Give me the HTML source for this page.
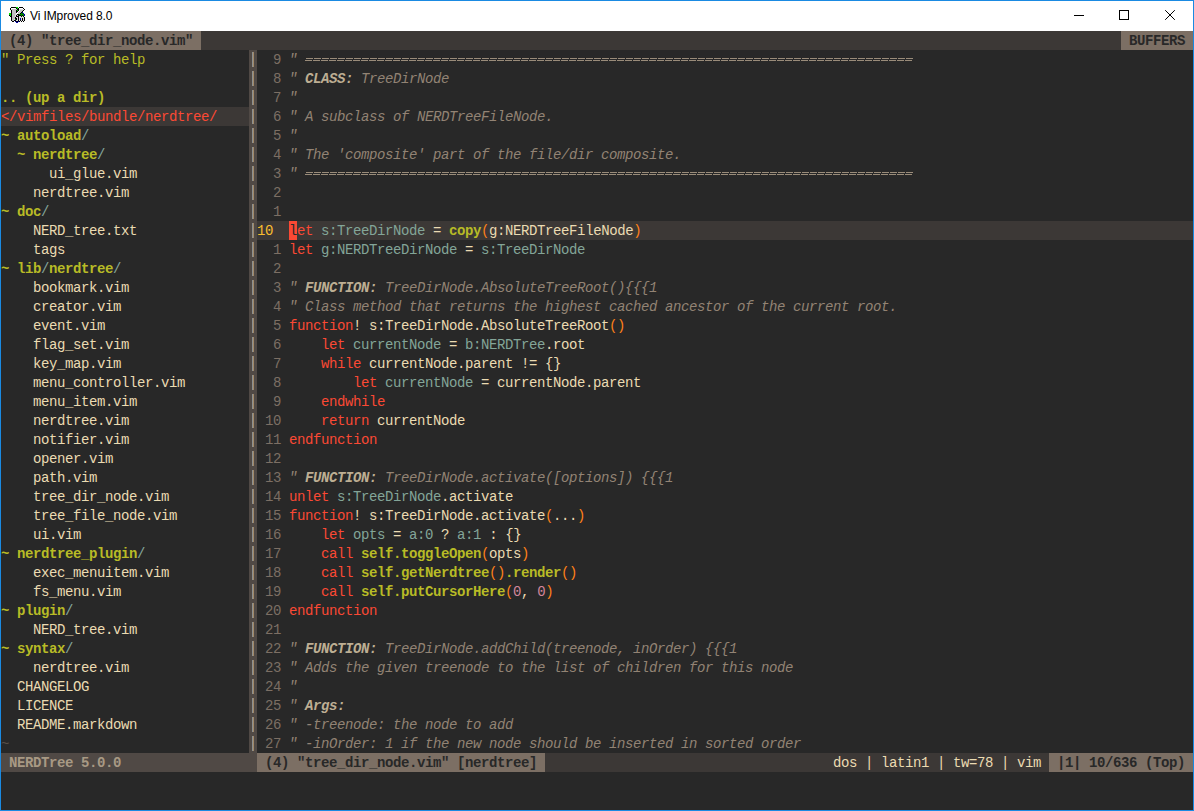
<!DOCTYPE html>
<html><head><meta charset="utf-8"><style>
html,body{margin:0;padding:0}
body{width:1194px;height:811px;position:relative;overflow:hidden;background:#282828}
.r{position:absolute;height:19px;line-height:19px;white-space:pre;font-family:"Liberation Mono",monospace;font-size:14.0px;letter-spacing:-0.4px}
#frame{position:absolute;left:0;top:0;width:1192px;height:809px;border:1px solid #1a8ae2;pointer-events:none}
#title{position:absolute;left:1px;top:1px;width:1192px;height:30px;background:#fff}
#tt{position:absolute;left:30px;top:8px;font-family:"Liberation Sans",sans-serif;font-size:12px;letter-spacing:-0.1px;color:#000;line-height:16px;white-space:pre}
</style></head><body>
<div id="title"></div>
<svg style="position:absolute;left:8px;top:6px" width="18" height="17" viewBox="0 0 18 17" shape-rendering="crispEdges"><rect x="3" y="1" width="5" height="1" fill="#000"/><rect x="8" y="1" width="2" height="1" fill="#00e000"/><rect x="10" y="1" width="1" height="1" fill="#fff"/><rect x="11" y="1" width="4" height="1" fill="#000"/><rect x="2" y="2" width="1" height="1" fill="#000"/><rect x="3" y="2" width="5" height="1" fill="#fff"/><rect x="8" y="2" width="1" height="1" fill="#000"/><rect x="9" y="2" width="1" height="1" fill="#00e000"/><rect x="10" y="2" width="1" height="1" fill="#000"/><rect x="11" y="2" width="4" height="1" fill="#fff"/><rect x="15" y="2" width="1" height="1" fill="#000"/><rect x="2" y="3" width="1" height="1" fill="#000"/><rect x="3" y="3" width="1" height="1" fill="#dcdcdc"/><rect x="4" y="3" width="5" height="1" fill="#c0c0c0"/><rect x="9" y="3" width="2" height="1" fill="#000"/><rect x="11" y="3" width="4" height="1" fill="#dcdcdc"/><rect x="16" y="3" width="1" height="1" fill="#000"/><rect x="3" y="4" width="1" height="1" fill="#000"/><rect x="4" y="4" width="4" height="1" fill="#c0c0c0"/><rect x="8" y="4" width="1" height="1" fill="#000"/><rect x="9" y="4" width="1" height="1" fill="#00e000"/><rect x="10" y="4" width="1" height="1" fill="#000"/><rect x="11" y="4" width="1" height="1" fill="#fff"/><rect x="12" y="4" width="3" height="1" fill="#c0c0c0"/><rect x="15" y="4" width="1" height="1" fill="#000"/><rect x="3" y="5" width="1" height="1" fill="#000"/><rect x="4" y="5" width="4" height="1" fill="#c0c0c0"/><rect x="8" y="5" width="2" height="1" fill="#000"/><rect x="10" y="5" width="1" height="1" fill="#fff"/><rect x="11" y="5" width="3" height="1" fill="#c0c0c0"/><rect x="14" y="5" width="1" height="1" fill="#000"/><rect x="3" y="6" width="1" height="1" fill="#000"/><rect x="4" y="6" width="4" height="1" fill="#c0c0c0"/><rect x="8" y="6" width="1" height="1" fill="#000"/><rect x="9" y="6" width="1" height="1" fill="#fff"/><rect x="10" y="6" width="3" height="1" fill="#c0c0c0"/><rect x="13" y="6" width="1" height="1" fill="#000"/><rect x="14" y="6" width="1" height="1" fill="#0000a8"/><rect x="1" y="7" width="2" height="1" fill="#00e000"/><rect x="3" y="7" width="1" height="1" fill="#000"/><rect x="4" y="7" width="4" height="1" fill="#c0c0c0"/><rect x="8" y="7" width="2" height="1" fill="#fff"/><rect x="10" y="7" width="2" height="1" fill="#c0c0c0"/><rect x="12" y="7" width="1" height="1" fill="#000"/><rect x="13" y="7" width="2" height="1" fill="#008800"/><rect x="15" y="7" width="1" height="1" fill="#0000a8"/><rect x="1" y="8" width="2" height="1" fill="#00e000"/><rect x="3" y="8" width="1" height="1" fill="#000"/><rect x="4" y="8" width="3" height="1" fill="#c0c0c0"/><rect x="7" y="8" width="2" height="1" fill="#dcdcdc"/><rect x="9" y="8" width="2" height="1" fill="#000"/><rect x="11" y="8" width="5" height="1" fill="#008800"/><rect x="16" y="8" width="1" height="1" fill="#0000a8"/><rect x="1" y="9" width="1" height="1" fill="#000"/><rect x="2" y="9" width="1" height="1" fill="#00e000"/><rect x="3" y="9" width="1" height="1" fill="#000"/><rect x="4" y="9" width="3" height="1" fill="#c0c0c0"/><rect x="7" y="9" width="1" height="1" fill="#dcdcdc"/><rect x="8" y="9" width="1" height="1" fill="#000"/><rect x="9" y="9" width="1" height="1" fill="#dcdcdc"/><rect x="10" y="9" width="3" height="1" fill="#000"/><rect x="13" y="9" width="1" height="1" fill="#008800"/><rect x="14" y="9" width="1" height="1" fill="#000"/><rect x="15" y="9" width="1" height="1" fill="#008800"/><rect x="16" y="9" width="1" height="1" fill="#0000a8"/><rect x="2" y="10" width="2" height="1" fill="#000"/><rect x="4" y="10" width="3" height="1" fill="#c0c0c0"/><rect x="7" y="10" width="1" height="1" fill="#dcdcdc"/><rect x="8" y="10" width="3" height="1" fill="#000"/><rect x="11" y="10" width="2" height="1" fill="#dcdcdc"/><rect x="13" y="10" width="1" height="1" fill="#000"/><rect x="14" y="10" width="1" height="1" fill="#dcdcdc"/><rect x="15" y="10" width="1" height="1" fill="#000"/><rect x="3" y="11" width="1" height="1" fill="#000"/><rect x="4" y="11" width="3" height="1" fill="#c0c0c0"/><rect x="7" y="11" width="1" height="1" fill="#000"/><rect x="8" y="11" width="2" height="1" fill="#dcdcdc"/><rect x="10" y="11" width="1" height="1" fill="#000"/><rect x="11" y="11" width="5" height="1" fill="#dcdcdc"/><rect x="16" y="11" width="1" height="1" fill="#000"/><rect x="3" y="12" width="1" height="1" fill="#000"/><rect x="4" y="12" width="3" height="1" fill="#c0c0c0"/><rect x="7" y="12" width="2" height="1" fill="#000"/><rect x="9" y="12" width="1" height="1" fill="#dcdcdc"/><rect x="10" y="12" width="1" height="1" fill="#000"/><rect x="11" y="12" width="1" height="1" fill="#dcdcdc"/><rect x="12" y="12" width="1" height="1" fill="#0000a8"/><rect x="13" y="12" width="1" height="1" fill="#dcdcdc"/><rect x="14" y="12" width="1" height="1" fill="#000"/><rect x="15" y="12" width="1" height="1" fill="#dcdcdc"/><rect x="16" y="12" width="1" height="1" fill="#000"/><rect x="3" y="13" width="1" height="1" fill="#000"/><rect x="4" y="13" width="2" height="1" fill="#c0c0c0"/><rect x="6" y="13" width="1" height="1" fill="#dcdcdc"/><rect x="7" y="13" width="1" height="1" fill="#008800"/><rect x="8" y="13" width="1" height="1" fill="#000"/><rect x="9" y="13" width="1" height="1" fill="#dcdcdc"/><rect x="10" y="13" width="1" height="1" fill="#000"/><rect x="11" y="13" width="1" height="1" fill="#dcdcdc"/><rect x="12" y="13" width="1" height="1" fill="#0000a8"/><rect x="13" y="13" width="1" height="1" fill="#dcdcdc"/><rect x="14" y="13" width="1" height="1" fill="#000"/><rect x="15" y="13" width="1" height="1" fill="#dcdcdc"/><rect x="16" y="13" width="1" height="1" fill="#000"/><rect x="3" y="14" width="1" height="1" fill="#000"/><rect x="4" y="14" width="2" height="1" fill="#c0c0c0"/><rect x="6" y="14" width="2" height="1" fill="#000"/><rect x="8" y="14" width="2" height="1" fill="#dcdcdc"/><rect x="10" y="14" width="1" height="1" fill="#000"/><rect x="11" y="14" width="1" height="1" fill="#dcdcdc"/><rect x="12" y="14" width="1" height="1" fill="#000"/><rect x="13" y="14" width="1" height="1" fill="#dcdcdc"/><rect x="14" y="14" width="1" height="1" fill="#000"/><rect x="15" y="14" width="1" height="1" fill="#dcdcdc"/><rect x="16" y="14" width="1" height="1" fill="#000"/><rect x="4" y="15" width="2" height="1" fill="#000"/><rect x="7" y="15" width="1" height="1" fill="#0000a8"/><rect x="8" y="15" width="2" height="1" fill="#000"/><rect x="10" y="15" width="1" height="1" fill="#0000a8"/><rect x="11" y="15" width="1" height="1" fill="#000"/><rect x="13" y="15" width="1" height="1" fill="#000"/><rect x="15" y="15" width="1" height="1" fill="#000"/><rect x="8" y="16" width="2" height="1" fill="#0000a8"/></svg>
<div id="tt">Vi IMproved 8.0</div>
<svg style="position:absolute;left:1064px;top:0" width="130" height="31" viewBox="0 0 130 31">
<rect x="10" y="15" width="10" height="1" fill="#000"/>
<rect x="55.5" y="10.5" width="9" height="9" fill="none" stroke="#000" stroke-width="1"/>
<path d="M101.2 10.2 L110.8 19.8 M110.8 10.2 L101.2 19.8" stroke="#000" stroke-width="1" fill="none"/>
</svg>
<div style="position:absolute;left:1px;top:31px;width:1192px;height:19px;background:#3c3836"></div>
<div style="position:absolute;left:1px;top:31px;width:200px;height:19px;background:#7c6f64"></div>
<div class="r" style="left:1px;top:32px"><span style="color:#282828;font-weight:bold"> (4) &quot;tree_dir_node.vim&quot; </span></div>
<div style="position:absolute;left:1121px;top:31px;width:72px;height:19px;background:#7c6f64"></div>
<div class="r" style="left:1121px;top:32px"><span style="color:#282828;font-weight:bold"> BUFFERS </span></div>
<div style="position:absolute;left:1px;top:107px;width:248px;height:19px;background:#3c3836"></div>
<div class="r" style="left:1px;top:51px"><span style="color:#b8bb26">&quot; Press ? for help</span></div>
<div class="r" style="left:1px;top:89px"><span style="color:#b8bb26;font-weight:bold">.. (up a dir)</span></div>
<div class="r" style="left:1px;top:108px"><span style="color:#fb4934">&lt;/vimfiles/bundle/nerdtree/</span></div>
<div class="r" style="left:1px;top:127px"><span style="color:#b8bb26;font-weight:bold">~ autoload</span><span style="color:#83a598">/</span></div>
<div class="r" style="left:1px;top:146px"><span style="color:#ebdbb2">  </span><span style="color:#b8bb26;font-weight:bold">~ nerdtree</span><span style="color:#83a598">/</span></div>
<div class="r" style="left:1px;top:165px"><span style="color:#ebdbb2">      ui_glue.vim</span></div>
<div class="r" style="left:1px;top:184px"><span style="color:#ebdbb2">    nerdtree.vim</span></div>
<div class="r" style="left:1px;top:203px"><span style="color:#b8bb26;font-weight:bold">~ doc</span><span style="color:#83a598">/</span></div>
<div class="r" style="left:1px;top:222px"><span style="color:#ebdbb2">    NERD_tree.txt</span></div>
<div class="r" style="left:1px;top:241px"><span style="color:#ebdbb2">    tags</span></div>
<div class="r" style="left:1px;top:260px"><span style="color:#b8bb26;font-weight:bold">~ lib</span><span style="color:#83a598">/</span><span style="color:#b8bb26;font-weight:bold">nerdtree</span><span style="color:#83a598">/</span></div>
<div class="r" style="left:1px;top:279px"><span style="color:#ebdbb2">    bookmark.vim</span></div>
<div class="r" style="left:1px;top:298px"><span style="color:#ebdbb2">    creator.vim</span></div>
<div class="r" style="left:1px;top:317px"><span style="color:#ebdbb2">    event.vim</span></div>
<div class="r" style="left:1px;top:336px"><span style="color:#ebdbb2">    flag_set.vim</span></div>
<div class="r" style="left:1px;top:355px"><span style="color:#ebdbb2">    key_map.vim</span></div>
<div class="r" style="left:1px;top:374px"><span style="color:#ebdbb2">    menu_controller.vim</span></div>
<div class="r" style="left:1px;top:393px"><span style="color:#ebdbb2">    menu_item.vim</span></div>
<div class="r" style="left:1px;top:412px"><span style="color:#ebdbb2">    nerdtree.vim</span></div>
<div class="r" style="left:1px;top:431px"><span style="color:#ebdbb2">    notifier.vim</span></div>
<div class="r" style="left:1px;top:450px"><span style="color:#ebdbb2">    opener.vim</span></div>
<div class="r" style="left:1px;top:469px"><span style="color:#ebdbb2">    path.vim</span></div>
<div class="r" style="left:1px;top:488px"><span style="color:#ebdbb2">    tree_dir_node.vim</span></div>
<div class="r" style="left:1px;top:507px"><span style="color:#ebdbb2">    tree_file_node.vim</span></div>
<div class="r" style="left:1px;top:526px"><span style="color:#ebdbb2">    ui.vim</span></div>
<div class="r" style="left:1px;top:545px"><span style="color:#b8bb26;font-weight:bold">~ nerdtree_plugin</span><span style="color:#83a598">/</span></div>
<div class="r" style="left:1px;top:564px"><span style="color:#ebdbb2">    exec_menuitem.vim</span></div>
<div class="r" style="left:1px;top:583px"><span style="color:#ebdbb2">    fs_menu.vim</span></div>
<div class="r" style="left:1px;top:602px"><span style="color:#b8bb26;font-weight:bold">~ plugin</span><span style="color:#83a598">/</span></div>
<div class="r" style="left:1px;top:621px"><span style="color:#ebdbb2">    NERD_tree.vim</span></div>
<div class="r" style="left:1px;top:640px"><span style="color:#b8bb26;font-weight:bold">~ syntax</span><span style="color:#83a598">/</span></div>
<div class="r" style="left:1px;top:659px"><span style="color:#ebdbb2">    nerdtree.vim</span></div>
<div class="r" style="left:1px;top:678px"><span style="color:#ebdbb2">  CHANGELOG</span></div>
<div class="r" style="left:1px;top:697px"><span style="color:#ebdbb2">  LICENCE</span></div>
<div class="r" style="left:1px;top:716px"><span style="color:#ebdbb2">  README.markdown</span></div>
<div class="r" style="left:1px;top:735px"><span style="color:#5a5049">~</span></div>
<div style="position:absolute;left:249px;top:50px;width:8px;height:19px;background:#504945"></div>
<div style="position:absolute;left:252px;top:52px;width:1px;height:15px;background:#8c9090"></div>
<div style="position:absolute;left:253px;top:52px;width:1px;height:15px;background:#a08868"></div>
<div style="position:absolute;left:249px;top:69px;width:8px;height:19px;background:#504945"></div>
<div style="position:absolute;left:252px;top:71px;width:1px;height:15px;background:#8c9090"></div>
<div style="position:absolute;left:253px;top:71px;width:1px;height:15px;background:#a08868"></div>
<div style="position:absolute;left:249px;top:88px;width:8px;height:19px;background:#504945"></div>
<div style="position:absolute;left:252px;top:90px;width:1px;height:15px;background:#8c9090"></div>
<div style="position:absolute;left:253px;top:90px;width:1px;height:15px;background:#a08868"></div>
<div style="position:absolute;left:249px;top:107px;width:8px;height:19px;background:#504945"></div>
<div style="position:absolute;left:252px;top:109px;width:1px;height:15px;background:#8c9090"></div>
<div style="position:absolute;left:253px;top:109px;width:1px;height:15px;background:#a08868"></div>
<div style="position:absolute;left:249px;top:126px;width:8px;height:19px;background:#504945"></div>
<div style="position:absolute;left:252px;top:128px;width:1px;height:15px;background:#8c9090"></div>
<div style="position:absolute;left:253px;top:128px;width:1px;height:15px;background:#a08868"></div>
<div style="position:absolute;left:249px;top:145px;width:8px;height:19px;background:#504945"></div>
<div style="position:absolute;left:252px;top:147px;width:1px;height:15px;background:#8c9090"></div>
<div style="position:absolute;left:253px;top:147px;width:1px;height:15px;background:#a08868"></div>
<div style="position:absolute;left:249px;top:164px;width:8px;height:19px;background:#504945"></div>
<div style="position:absolute;left:252px;top:166px;width:1px;height:15px;background:#8c9090"></div>
<div style="position:absolute;left:253px;top:166px;width:1px;height:15px;background:#a08868"></div>
<div style="position:absolute;left:249px;top:183px;width:8px;height:19px;background:#504945"></div>
<div style="position:absolute;left:252px;top:185px;width:1px;height:15px;background:#8c9090"></div>
<div style="position:absolute;left:253px;top:185px;width:1px;height:15px;background:#a08868"></div>
<div style="position:absolute;left:249px;top:202px;width:8px;height:19px;background:#504945"></div>
<div style="position:absolute;left:252px;top:204px;width:1px;height:15px;background:#8c9090"></div>
<div style="position:absolute;left:253px;top:204px;width:1px;height:15px;background:#a08868"></div>
<div style="position:absolute;left:249px;top:221px;width:8px;height:19px;background:#504945"></div>
<div style="position:absolute;left:252px;top:223px;width:1px;height:15px;background:#8c9090"></div>
<div style="position:absolute;left:253px;top:223px;width:1px;height:15px;background:#a08868"></div>
<div style="position:absolute;left:249px;top:240px;width:8px;height:19px;background:#504945"></div>
<div style="position:absolute;left:252px;top:242px;width:1px;height:15px;background:#8c9090"></div>
<div style="position:absolute;left:253px;top:242px;width:1px;height:15px;background:#a08868"></div>
<div style="position:absolute;left:249px;top:259px;width:8px;height:19px;background:#504945"></div>
<div style="position:absolute;left:252px;top:261px;width:1px;height:15px;background:#8c9090"></div>
<div style="position:absolute;left:253px;top:261px;width:1px;height:15px;background:#a08868"></div>
<div style="position:absolute;left:249px;top:278px;width:8px;height:19px;background:#504945"></div>
<div style="position:absolute;left:252px;top:280px;width:1px;height:15px;background:#8c9090"></div>
<div style="position:absolute;left:253px;top:280px;width:1px;height:15px;background:#a08868"></div>
<div style="position:absolute;left:249px;top:297px;width:8px;height:19px;background:#504945"></div>
<div style="position:absolute;left:252px;top:299px;width:1px;height:15px;background:#8c9090"></div>
<div style="position:absolute;left:253px;top:299px;width:1px;height:15px;background:#a08868"></div>
<div style="position:absolute;left:249px;top:316px;width:8px;height:19px;background:#504945"></div>
<div style="position:absolute;left:252px;top:318px;width:1px;height:15px;background:#8c9090"></div>
<div style="position:absolute;left:253px;top:318px;width:1px;height:15px;background:#a08868"></div>
<div style="position:absolute;left:249px;top:335px;width:8px;height:19px;background:#504945"></div>
<div style="position:absolute;left:252px;top:337px;width:1px;height:15px;background:#8c9090"></div>
<div style="position:absolute;left:253px;top:337px;width:1px;height:15px;background:#a08868"></div>
<div style="position:absolute;left:249px;top:354px;width:8px;height:19px;background:#504945"></div>
<div style="position:absolute;left:252px;top:356px;width:1px;height:15px;background:#8c9090"></div>
<div style="position:absolute;left:253px;top:356px;width:1px;height:15px;background:#a08868"></div>
<div style="position:absolute;left:249px;top:373px;width:8px;height:19px;background:#504945"></div>
<div style="position:absolute;left:252px;top:375px;width:1px;height:15px;background:#8c9090"></div>
<div style="position:absolute;left:253px;top:375px;width:1px;height:15px;background:#a08868"></div>
<div style="position:absolute;left:249px;top:392px;width:8px;height:19px;background:#504945"></div>
<div style="position:absolute;left:252px;top:394px;width:1px;height:15px;background:#8c9090"></div>
<div style="position:absolute;left:253px;top:394px;width:1px;height:15px;background:#a08868"></div>
<div style="position:absolute;left:249px;top:411px;width:8px;height:19px;background:#504945"></div>
<div style="position:absolute;left:252px;top:413px;width:1px;height:15px;background:#8c9090"></div>
<div style="position:absolute;left:253px;top:413px;width:1px;height:15px;background:#a08868"></div>
<div style="position:absolute;left:249px;top:430px;width:8px;height:19px;background:#504945"></div>
<div style="position:absolute;left:252px;top:432px;width:1px;height:15px;background:#8c9090"></div>
<div style="position:absolute;left:253px;top:432px;width:1px;height:15px;background:#a08868"></div>
<div style="position:absolute;left:249px;top:449px;width:8px;height:19px;background:#504945"></div>
<div style="position:absolute;left:252px;top:451px;width:1px;height:15px;background:#8c9090"></div>
<div style="position:absolute;left:253px;top:451px;width:1px;height:15px;background:#a08868"></div>
<div style="position:absolute;left:249px;top:468px;width:8px;height:19px;background:#504945"></div>
<div style="position:absolute;left:252px;top:470px;width:1px;height:15px;background:#8c9090"></div>
<div style="position:absolute;left:253px;top:470px;width:1px;height:15px;background:#a08868"></div>
<div style="position:absolute;left:249px;top:487px;width:8px;height:19px;background:#504945"></div>
<div style="position:absolute;left:252px;top:489px;width:1px;height:15px;background:#8c9090"></div>
<div style="position:absolute;left:253px;top:489px;width:1px;height:15px;background:#a08868"></div>
<div style="position:absolute;left:249px;top:506px;width:8px;height:19px;background:#504945"></div>
<div style="position:absolute;left:252px;top:508px;width:1px;height:15px;background:#8c9090"></div>
<div style="position:absolute;left:253px;top:508px;width:1px;height:15px;background:#a08868"></div>
<div style="position:absolute;left:249px;top:525px;width:8px;height:19px;background:#504945"></div>
<div style="position:absolute;left:252px;top:527px;width:1px;height:15px;background:#8c9090"></div>
<div style="position:absolute;left:253px;top:527px;width:1px;height:15px;background:#a08868"></div>
<div style="position:absolute;left:249px;top:544px;width:8px;height:19px;background:#504945"></div>
<div style="position:absolute;left:252px;top:546px;width:1px;height:15px;background:#8c9090"></div>
<div style="position:absolute;left:253px;top:546px;width:1px;height:15px;background:#a08868"></div>
<div style="position:absolute;left:249px;top:563px;width:8px;height:19px;background:#504945"></div>
<div style="position:absolute;left:252px;top:565px;width:1px;height:15px;background:#8c9090"></div>
<div style="position:absolute;left:253px;top:565px;width:1px;height:15px;background:#a08868"></div>
<div style="position:absolute;left:249px;top:582px;width:8px;height:19px;background:#504945"></div>
<div style="position:absolute;left:252px;top:584px;width:1px;height:15px;background:#8c9090"></div>
<div style="position:absolute;left:253px;top:584px;width:1px;height:15px;background:#a08868"></div>
<div style="position:absolute;left:249px;top:601px;width:8px;height:19px;background:#504945"></div>
<div style="position:absolute;left:252px;top:603px;width:1px;height:15px;background:#8c9090"></div>
<div style="position:absolute;left:253px;top:603px;width:1px;height:15px;background:#a08868"></div>
<div style="position:absolute;left:249px;top:620px;width:8px;height:19px;background:#504945"></div>
<div style="position:absolute;left:252px;top:622px;width:1px;height:15px;background:#8c9090"></div>
<div style="position:absolute;left:253px;top:622px;width:1px;height:15px;background:#a08868"></div>
<div style="position:absolute;left:249px;top:639px;width:8px;height:19px;background:#504945"></div>
<div style="position:absolute;left:252px;top:641px;width:1px;height:15px;background:#8c9090"></div>
<div style="position:absolute;left:253px;top:641px;width:1px;height:15px;background:#a08868"></div>
<div style="position:absolute;left:249px;top:658px;width:8px;height:19px;background:#504945"></div>
<div style="position:absolute;left:252px;top:660px;width:1px;height:15px;background:#8c9090"></div>
<div style="position:absolute;left:253px;top:660px;width:1px;height:15px;background:#a08868"></div>
<div style="position:absolute;left:249px;top:677px;width:8px;height:19px;background:#504945"></div>
<div style="position:absolute;left:252px;top:679px;width:1px;height:15px;background:#8c9090"></div>
<div style="position:absolute;left:253px;top:679px;width:1px;height:15px;background:#a08868"></div>
<div style="position:absolute;left:249px;top:696px;width:8px;height:19px;background:#504945"></div>
<div style="position:absolute;left:252px;top:698px;width:1px;height:15px;background:#8c9090"></div>
<div style="position:absolute;left:253px;top:698px;width:1px;height:15px;background:#a08868"></div>
<div style="position:absolute;left:249px;top:715px;width:8px;height:19px;background:#504945"></div>
<div style="position:absolute;left:252px;top:717px;width:1px;height:15px;background:#8c9090"></div>
<div style="position:absolute;left:253px;top:717px;width:1px;height:15px;background:#a08868"></div>
<div style="position:absolute;left:249px;top:734px;width:8px;height:19px;background:#504945"></div>
<div style="position:absolute;left:252px;top:736px;width:1px;height:15px;background:#8c9090"></div>
<div style="position:absolute;left:253px;top:736px;width:1px;height:15px;background:#a08868"></div>
<div style="position:absolute;left:257px;top:221px;width:936px;height:19px;background:#3c3836"></div>
<div class="r" style="left:257px;top:51px"><span style="color:#7c6f64">  9</span></div>
<div class="r" style="left:289px;top:51px"><span style="color:#928374;font-style:italic">&quot;</span></div>
<div class="r" style="left:257px;top:70px"><span style="color:#7c6f64">  8</span></div>
<div class="r" style="left:289px;top:70px"><span style="color:#928374;font-style:italic">&quot; </span><span style="color:#bdae93;font-weight:bold;font-style:italic">CLASS:</span><span style="color:#928374;font-style:italic"> TreeDirNode</span></div>
<div class="r" style="left:257px;top:89px"><span style="color:#7c6f64">  7</span></div>
<div class="r" style="left:289px;top:89px"><span style="color:#928374;font-style:italic">&quot;</span></div>
<div class="r" style="left:257px;top:108px"><span style="color:#7c6f64">  6</span></div>
<div class="r" style="left:289px;top:108px"><span style="color:#928374;font-style:italic">&quot; A subclass of NERDTreeFileNode.</span></div>
<div class="r" style="left:257px;top:127px"><span style="color:#7c6f64">  5</span></div>
<div class="r" style="left:289px;top:127px"><span style="color:#928374;font-style:italic">&quot;</span></div>
<div class="r" style="left:257px;top:146px"><span style="color:#7c6f64">  4</span></div>
<div class="r" style="left:289px;top:146px"><span style="color:#928374;font-style:italic">&quot; The &#x27;composite&#x27; part of the file/dir composite.</span></div>
<div class="r" style="left:257px;top:165px"><span style="color:#7c6f64">  3</span></div>
<div class="r" style="left:289px;top:165px"><span style="color:#928374;font-style:italic">&quot;</span></div>
<div class="r" style="left:257px;top:184px"><span style="color:#7c6f64">  2</span></div>
<div class="r" style="left:257px;top:203px"><span style="color:#7c6f64">  1</span></div>
<div class="r" style="left:257px;top:222px"><span style="color:#fabd2f">10</span></div>
<div style="position:absolute;left:289px;top:221px;width:8px;height:19px;background:#fb4934"></div>
<div class="r" style="left:289px;top:222px"><span style="color:#282828">l</span></div>
<div class="r" style="left:297px;top:222px"><span style="color:#fb4934">et</span><span style="color:#ebdbb2"> </span><span style="color:#83a598">s:TreeDirNode</span><span style="color:#ebdbb2"> = </span><span style="color:#b8bb26;font-weight:bold">copy</span><span style="color:#fe8019">(</span><span style="color:#ebdbb2">g:NERDTreeFileNode</span><span style="color:#fe8019">)</span></div>
<div class="r" style="left:257px;top:241px"><span style="color:#7c6f64">  1</span></div>
<div class="r" style="left:289px;top:241px"><span style="color:#fb4934">let</span><span style="color:#ebdbb2"> </span><span style="color:#83a598">g:NERDTreeDirNode</span><span style="color:#ebdbb2"> = </span><span style="color:#83a598">s:TreeDirNode</span></div>
<div class="r" style="left:257px;top:260px"><span style="color:#7c6f64">  2</span></div>
<div class="r" style="left:257px;top:279px"><span style="color:#7c6f64">  3</span></div>
<div class="r" style="left:289px;top:279px"><span style="color:#928374;font-style:italic">&quot; </span><span style="color:#bdae93;font-weight:bold;font-style:italic">FUNCTION:</span><span style="color:#928374;font-style:italic"> TreeDirNode.AbsoluteTreeRoot(){{{1</span></div>
<div class="r" style="left:257px;top:298px"><span style="color:#7c6f64">  4</span></div>
<div class="r" style="left:289px;top:298px"><span style="color:#928374;font-style:italic">&quot; Class method that returns the highest cached ancestor of the current root.</span></div>
<div class="r" style="left:257px;top:317px"><span style="color:#7c6f64">  5</span></div>
<div class="r" style="left:289px;top:317px"><span style="color:#fb4934">function</span><span style="color:#ebdbb2">! s:TreeDirNode.AbsoluteTreeRoot</span><span style="color:#fe8019">()</span></div>
<div class="r" style="left:257px;top:336px"><span style="color:#7c6f64">  6</span></div>
<div class="r" style="left:289px;top:336px"><span style="color:#ebdbb2">    </span><span style="color:#fb4934">let</span><span style="color:#ebdbb2"> </span><span style="color:#83a598">currentNode</span><span style="color:#ebdbb2"> = </span><span style="color:#83a598">b:NERDTree</span><span style="color:#ebdbb2">.root</span></div>
<div class="r" style="left:257px;top:355px"><span style="color:#7c6f64">  7</span></div>
<div class="r" style="left:289px;top:355px"><span style="color:#ebdbb2">    </span><span style="color:#fb4934">while</span><span style="color:#ebdbb2"> currentNode.parent != {}</span></div>
<div class="r" style="left:257px;top:374px"><span style="color:#7c6f64">  8</span></div>
<div class="r" style="left:289px;top:374px"><span style="color:#ebdbb2">        </span><span style="color:#fb4934">let</span><span style="color:#ebdbb2"> </span><span style="color:#83a598">currentNode</span><span style="color:#ebdbb2"> = currentNode.parent</span></div>
<div class="r" style="left:257px;top:393px"><span style="color:#7c6f64">  9</span></div>
<div class="r" style="left:289px;top:393px"><span style="color:#ebdbb2">    </span><span style="color:#fb4934">endwhile</span></div>
<div class="r" style="left:257px;top:412px"><span style="color:#7c6f64"> 10</span></div>
<div class="r" style="left:289px;top:412px"><span style="color:#ebdbb2">    </span><span style="color:#fb4934">return</span><span style="color:#ebdbb2"> currentNode</span></div>
<div class="r" style="left:257px;top:431px"><span style="color:#7c6f64"> 11</span></div>
<div class="r" style="left:289px;top:431px"><span style="color:#fb4934">endfunction</span></div>
<div class="r" style="left:257px;top:450px"><span style="color:#7c6f64"> 12</span></div>
<div class="r" style="left:257px;top:469px"><span style="color:#7c6f64"> 13</span></div>
<div class="r" style="left:289px;top:469px"><span style="color:#928374;font-style:italic">&quot; </span><span style="color:#bdae93;font-weight:bold;font-style:italic">FUNCTION:</span><span style="color:#928374;font-style:italic"> TreeDirNode.activate([options]) {{{1</span></div>
<div class="r" style="left:257px;top:488px"><span style="color:#7c6f64"> 14</span></div>
<div class="r" style="left:289px;top:488px"><span style="color:#fb4934">unlet</span><span style="color:#ebdbb2"> </span><span style="color:#83a598">s:TreeDirNode</span><span style="color:#ebdbb2">.activate</span></div>
<div class="r" style="left:257px;top:507px"><span style="color:#7c6f64"> 15</span></div>
<div class="r" style="left:289px;top:507px"><span style="color:#fb4934">function</span><span style="color:#ebdbb2">! s:TreeDirNode.activate</span><span style="color:#fe8019">(</span><span style="color:#ebdbb2">...</span><span style="color:#fe8019">)</span></div>
<div class="r" style="left:257px;top:526px"><span style="color:#7c6f64"> 16</span></div>
<div class="r" style="left:289px;top:526px"><span style="color:#ebdbb2">    </span><span style="color:#fb4934">let</span><span style="color:#ebdbb2"> </span><span style="color:#83a598">opts</span><span style="color:#ebdbb2"> = </span><span style="color:#83a598">a:0</span><span style="color:#ebdbb2"> ? </span><span style="color:#83a598">a:1</span><span style="color:#ebdbb2"> : {}</span></div>
<div class="r" style="left:257px;top:545px"><span style="color:#7c6f64"> 17</span></div>
<div class="r" style="left:289px;top:545px"><span style="color:#ebdbb2">    </span><span style="color:#fb4934">call</span><span style="color:#ebdbb2"> </span><span style="color:#b8bb26;font-weight:bold">self.toggleOpen</span><span style="color:#fe8019">(</span><span style="color:#ebdbb2">opts</span><span style="color:#fe8019">)</span></div>
<div class="r" style="left:257px;top:564px"><span style="color:#7c6f64"> 18</span></div>
<div class="r" style="left:289px;top:564px"><span style="color:#ebdbb2">    </span><span style="color:#fb4934">call</span><span style="color:#ebdbb2"> </span><span style="color:#b8bb26;font-weight:bold">self.getNerdtree</span><span style="color:#fe8019">()</span><span style="color:#b8bb26;font-weight:bold">.render</span><span style="color:#fe8019">()</span></div>
<div class="r" style="left:257px;top:583px"><span style="color:#7c6f64"> 19</span></div>
<div class="r" style="left:289px;top:583px"><span style="color:#ebdbb2">    </span><span style="color:#fb4934">call</span><span style="color:#ebdbb2"> </span><span style="color:#b8bb26;font-weight:bold">self.putCursorHere</span><span style="color:#fe8019">(</span><span style="color:#d3869b">0</span><span style="color:#ebdbb2">, </span><span style="color:#d3869b">0</span><span style="color:#fe8019">)</span></div>
<div class="r" style="left:257px;top:602px"><span style="color:#7c6f64"> 20</span></div>
<div class="r" style="left:289px;top:602px"><span style="color:#fb4934">endfunction</span></div>
<div class="r" style="left:257px;top:621px"><span style="color:#7c6f64"> 21</span></div>
<div class="r" style="left:257px;top:640px"><span style="color:#7c6f64"> 22</span></div>
<div class="r" style="left:289px;top:640px"><span style="color:#928374;font-style:italic">&quot; </span><span style="color:#bdae93;font-weight:bold;font-style:italic">FUNCTION:</span><span style="color:#928374;font-style:italic"> TreeDirNode.addChild(treenode, inOrder) {{{1</span></div>
<div class="r" style="left:257px;top:659px"><span style="color:#7c6f64"> 23</span></div>
<div class="r" style="left:289px;top:659px"><span style="color:#928374;font-style:italic">&quot; Adds the given treenode to the list of children for this node</span></div>
<div class="r" style="left:257px;top:678px"><span style="color:#7c6f64"> 24</span></div>
<div class="r" style="left:289px;top:678px"><span style="color:#928374;font-style:italic">&quot;</span></div>
<div class="r" style="left:257px;top:697px"><span style="color:#7c6f64"> 25</span></div>
<div class="r" style="left:289px;top:697px"><span style="color:#928374;font-style:italic">&quot; </span><span style="color:#bdae93;font-weight:bold;font-style:italic">Args:</span></div>
<div class="r" style="left:257px;top:716px"><span style="color:#7c6f64"> 26</span></div>
<div class="r" style="left:289px;top:716px"><span style="color:#928374;font-style:italic">&quot; -treenode: the node to add</span></div>
<div class="r" style="left:257px;top:735px"><span style="color:#7c6f64"> 27</span></div>
<div class="r" style="left:289px;top:735px"><span style="color:#928374;font-style:italic">&quot; -inOrder: 1 if the new node should be inserted in sorted order</span></div>
<div style="position:absolute;left:305px;top:58px;width:608px;height:1px;background:repeating-linear-gradient(90deg,transparent 0 1px,#9a8c7a 1px 8px)"></div>
<div style="position:absolute;left:305px;top:60px;width:608px;height:1px;background:repeating-linear-gradient(90deg,#9a8c7a 0 7px,transparent 7px 8px)"></div>
<div style="position:absolute;left:305px;top:172px;width:608px;height:1px;background:repeating-linear-gradient(90deg,transparent 0 1px,#9a8c7a 1px 8px)"></div>
<div style="position:absolute;left:305px;top:174px;width:608px;height:1px;background:repeating-linear-gradient(90deg,#9a8c7a 0 7px,transparent 7px 8px)"></div>
<div style="position:absolute;left:1px;top:753px;width:1192px;height:19px;background:#3c3836"></div>
<div style="position:absolute;left:1px;top:753px;width:256px;height:19px;background:#504945"></div>
<div class="r" style="left:1px;top:754px"><span style="color:#a89984;font-weight:bold"> NERDTree 5.0.0</span></div>
<div style="position:absolute;left:257px;top:753px;width:288px;height:19px;background:#7c6f64"></div>
<div class="r" style="left:257px;top:754px"><span style="color:#282828;font-weight:bold"> (4) &quot;tree_dir_node.vim&quot; [nerdtree] </span></div>
<div class="r" style="left:825px;top:754px"><span style="color:#ebdbb2"> dos | latin1 | tw=78 | vim </span></div>
<div style="position:absolute;left:1049px;top:753px;width:144px;height:19px;background:#7c6f64"></div>
<div class="r" style="left:1049px;top:754px"><span style="color:#282828;font-weight:bold"> |1| 10/636 (Top) </span></div>
<div id="frame"></div>
</body></html>
